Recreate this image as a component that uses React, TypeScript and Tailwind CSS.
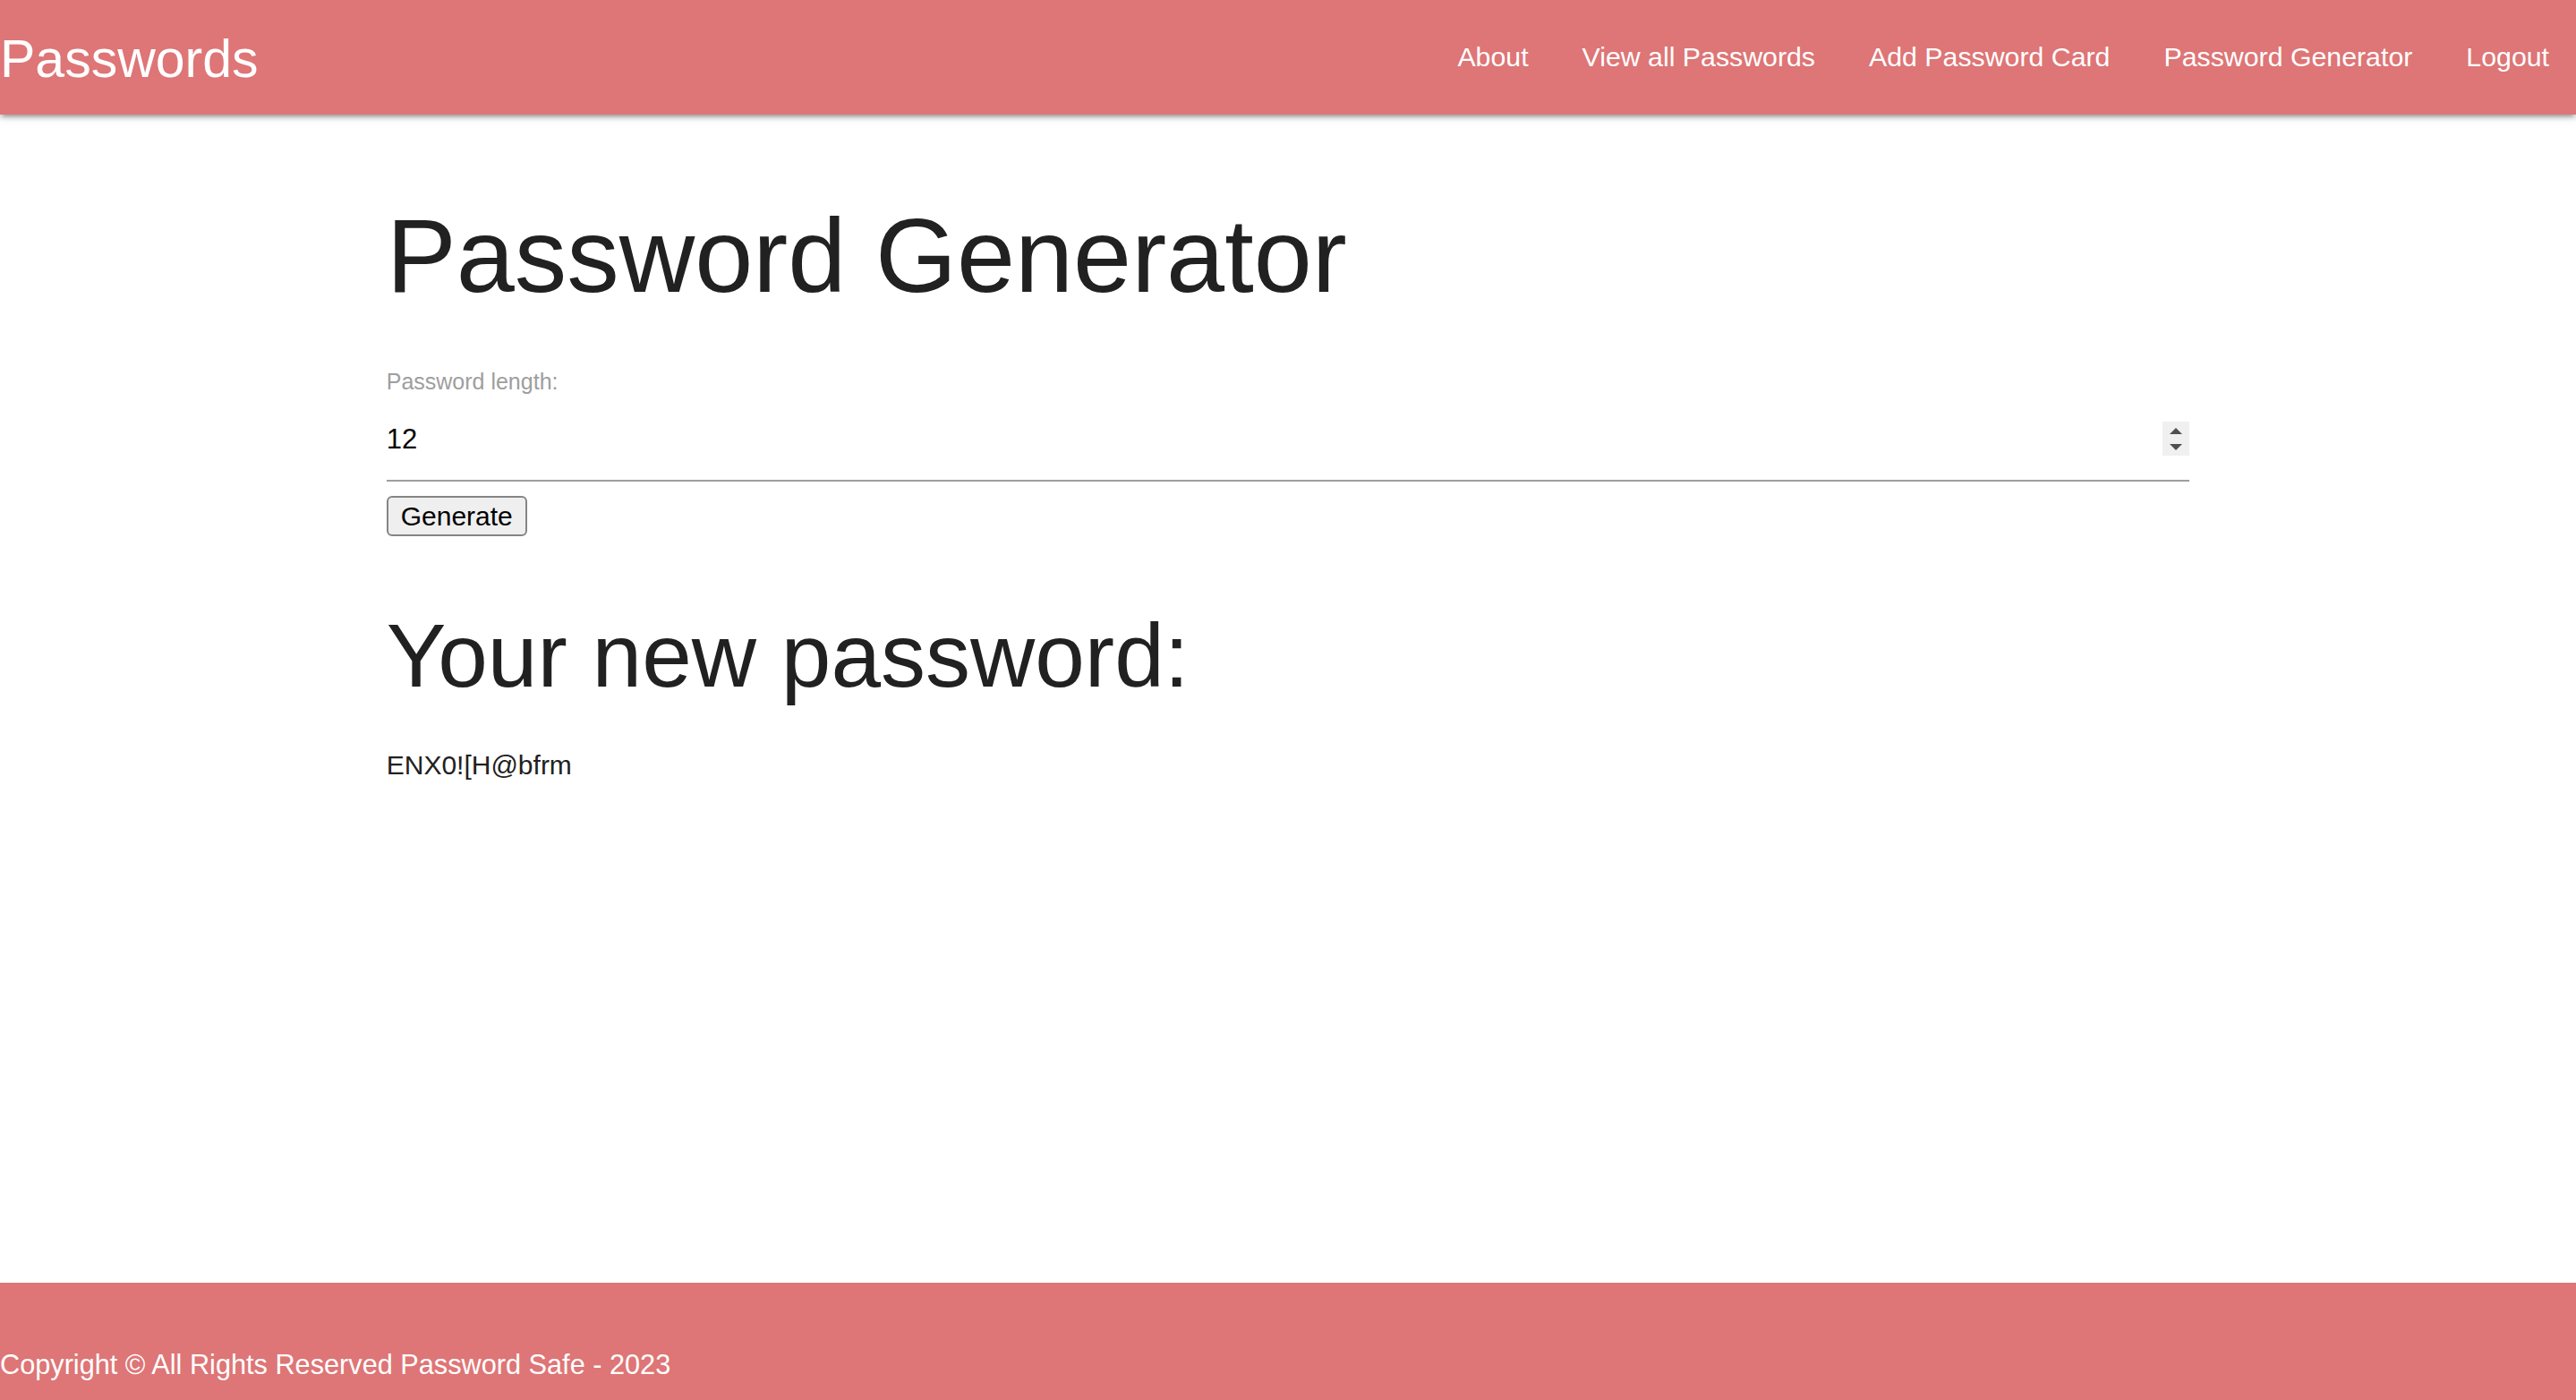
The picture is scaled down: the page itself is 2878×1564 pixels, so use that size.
import React from 'react';

const links = ['About', 'View all Passwords', 'Add Password Card', 'Password Generator', 'Logout'];

function Spinner() {
  return (
    <svg width="30" height="38" viewBox="0 0 30 38" className="mt-[3px] shrink-0">
      <rect width="30" height="38" fill="#f0f0f0" />
      <polygon points="8,14 22,14 15,7" fill="#505050" />
      <polygon points="8,25 22,25 15,32" fill="#505050" />
    </svg>
  );
}

export default function App() {
  return (
    <div className="min-h-screen flex flex-col bg-white font-['Liberation_Sans',Arial,sans-serif]">
      <nav className="h-[128px] bg-[#de7576] text-white flex items-center justify-between shadow-[0_4px_4px_0_rgba(0,0,0,0.14),0_6px_2px_-4px_rgba(0,0,0,0.12),0_2px_10px_0_rgba(0,0,0,0.2)] relative z-10">
        <a href="#" className="text-[59px] leading-[128px] pt-[4px]">Passwords</a>
        <ul className="flex h-full">
          {links.map((l) => (
            <li key={l}>
              <a href="#" className="block px-[30px] text-[30.3px] leading-[128px]">{l}</a>
            </li>
          ))}
        </ul>
      </nav>

      <main className="flex-1">
        <div className="w-[70%] mx-auto text-[#212121]">
          <h1 className="mt-[93px] text-[117px] leading-[130px]">Password Generator</h1>

          <label className="block mt-[60px] text-[25px] leading-[30px] text-[#9e9e9e]">Password length:</label>
          <div className="flex items-center h-[97px] border-b-2 border-[#9e9e9e]">
            <input
              type="text"
              defaultValue="12"
              className="flex-1 outline-none bg-transparent text-[31px] text-black pt-[5px]"
            />
            <Spinner />
          </div>

          <div className="mt-[16px]">
            <button className="h-[45px] px-[14px] bg-[#efefef] border-2 border-[#858585] rounded-[6px] text-[30px] leading-[36px] text-black">
              Generate
            </button>
          </div>

          <h2 className="mt-[78px] text-[100px] leading-[110px]">Your new password:</h2>
          <p className="mt-[45px] text-[30px] leading-[45px]">ENX0![H@bfrm</p>
        </div>
      </main>

      <footer className="h-[131px] bg-[#de7576] text-white flex items-end pb-[17px]">
        <p className="text-[30.7px] leading-[45px]">Copyright © All Rights Reserved Password Safe - 2023</p>
      </footer>
    </div>
  );
}
